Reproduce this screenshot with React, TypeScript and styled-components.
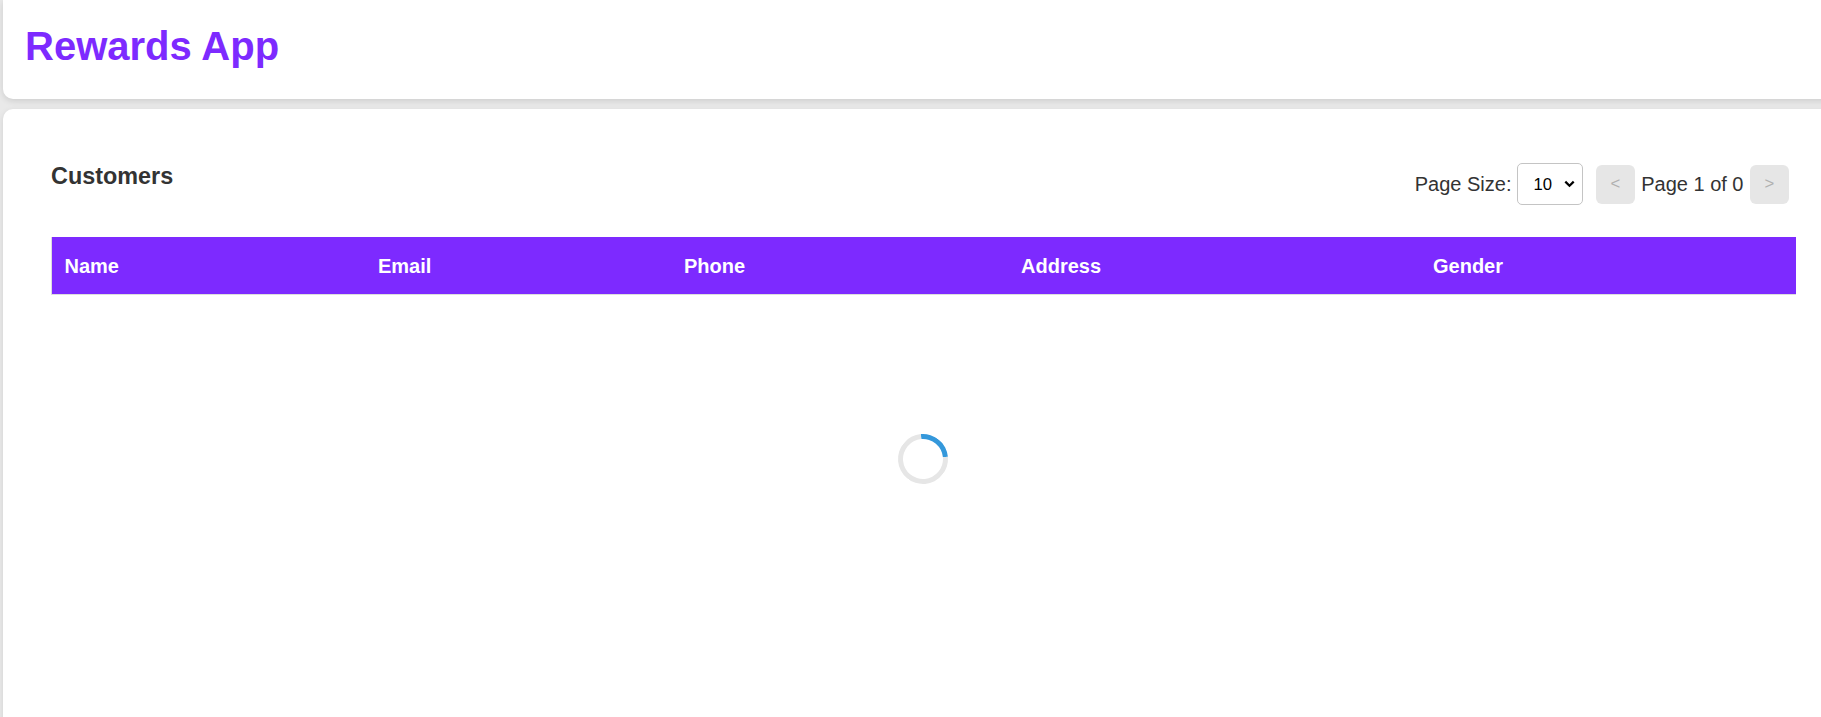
import React from "react";
import styled, { createGlobalStyle } from "styled-components";

const GlobalStyle = createGlobalStyle`
  html, body {
    margin: 0;
    padding: 0;
    background: #e9e9e9;
    overflow: hidden;
    font-family: "Liberation Sans", Arial, sans-serif;
  }
  * { box-sizing: border-box; }
`;

const Page = styled.div`
  display: flex;
  flex-direction: column;
  gap: 10px;
  padding-left: 3px;
  width: 1843px;
`;

const Header = styled.header`
  background: #fff;
  border-radius: 0 0 10px 10px;
  box-shadow: 0 2px 6px rgba(0, 0, 0, 0.12);
  padding: 23px 22px 30px;
`;

const Title = styled.h1`
  margin: 0;
  font-size: 40px;
  line-height: 46px;
  font-weight: 700;
  color: #7d2aff;
`;

const Card = styled.main`
  background: #fff;
  border-radius: 10px;
  box-shadow: 0 2px 6px rgba(0, 0, 0, 0.1);
  padding: 52px 48px 0;
  min-height: 800px;
`;

const TopRow = styled.div`
  display: flex;
  justify-content: space-between;
  align-items: flex-start;
`;

const SectionTitle = styled.h3`
  margin: 2px 0 0;
  font-size: 23.4px;
  line-height: 27px;
  font-weight: 700;
  color: #333;
`;

const Controls = styled.div`
  display: flex;
  align-items: center;
  margin-top: 2px;
  font-size: 20px;
  color: #333;
`;

const Label = styled.span`
  line-height: 23px;
`;

const SelectWrap = styled.div`
  position: relative;
  margin: 0 6.25px 0 6px;
`;

const Select = styled.select`
  appearance: none;
  -webkit-appearance: none;
  width: 66px;
  height: 42px;
  border: 1px solid #c4c4c4;
  border-radius: 5px;
  background: #fff;
  padding: 0 0 0 15px;
  font-family: "Liberation Sans", Arial, sans-serif;
  font-size: 16.7px;
  color: #000;
`;

const Chevron = styled.svg`
  position: absolute;
  right: 8px;
  top: 17px;
  pointer-events: none;
`;

const PageButton = styled.button`
  width: 39px;
  height: 39px;
  margin: 0 6.25px;
  border: none;
  border-radius: 6px;
  background: #e6e6e6;
  color: #b0b0b0;
  font-family: "Liberation Sans", Arial, sans-serif;
  font-size: 16.7px;
  padding: 0;
  display: flex;
  align-items: center;
  justify-content: center;
`;

const PageInfo = styled.span`
  line-height: 23px;
`;

const Table = styled.table`
  margin-top: 32px;
  width: 100%;
  border-collapse: collapse;
  table-layout: fixed;
  border-left: 1px solid #ddd;
`;

const Th = styled.th`
  background: #7d2aff;
  color: #fff;
  font-size: 20px;
  font-weight: 700;
  text-align: left;
  line-height: 23px;
  padding: 17.5px 12.5px 16.5px;
  border-bottom: 1px solid #ddd;
`;

const SpinnerArea = styled.div`
  display: flex;
  justify-content: center;
  padding-top: 139px;
`;

const Spinner = styled.div`
  width: 50px;
  height: 50px;
  border-radius: 50%;
  border: 5px solid #e6e6e6;
  border-top-color: #3498db;
  transform: rotate(40deg);
`;

const columns = [
  { label: "Name", width: 314 },
  { label: "Email", width: 306 },
  { label: "Phone", width: 337 },
  { label: "Address", width: 412 },
  { label: "Gender", width: 375 },
];

export default function App() {
  return (
    <>
      <GlobalStyle />
      <Page>
        <Header>
          <Title>Rewards App</Title>
        </Header>
        <Card>
          <TopRow>
            <SectionTitle>Customers</SectionTitle>
            <Controls>
              <Label>Page Size:</Label>
              <SelectWrap>
                <Select defaultValue="10">
                  <option value="5">5</option>
                  <option value="10">10</option>
                  <option value="20">20</option>
                </Select>
                <Chevron width="11" height="8" viewBox="0 0 11 8">
                  <path d="M1.3 1.6 L5.5 5.8 L9.7 1.6" fill="none" stroke="#000" strokeWidth="2.2" />
                </Chevron>
              </SelectWrap>
              <PageButton disabled>&lt;</PageButton>
              <PageInfo>Page 1 of 0</PageInfo>
              <PageButton disabled>&gt;</PageButton>
            </Controls>
          </TopRow>
          <Table>
            <colgroup>
              {columns.map((c) => (
                <col key={c.label} style={{ width: c.width }} />
              ))}
            </colgroup>
            <thead>
              <tr>
                {columns.map((c) => (
                  <Th key={c.label}>{c.label}</Th>
                ))}
              </tr>
            </thead>
          </Table>
          <SpinnerArea>
            <Spinner />
          </SpinnerArea>
        </Card>
      </Page>
    </>
  );
}
